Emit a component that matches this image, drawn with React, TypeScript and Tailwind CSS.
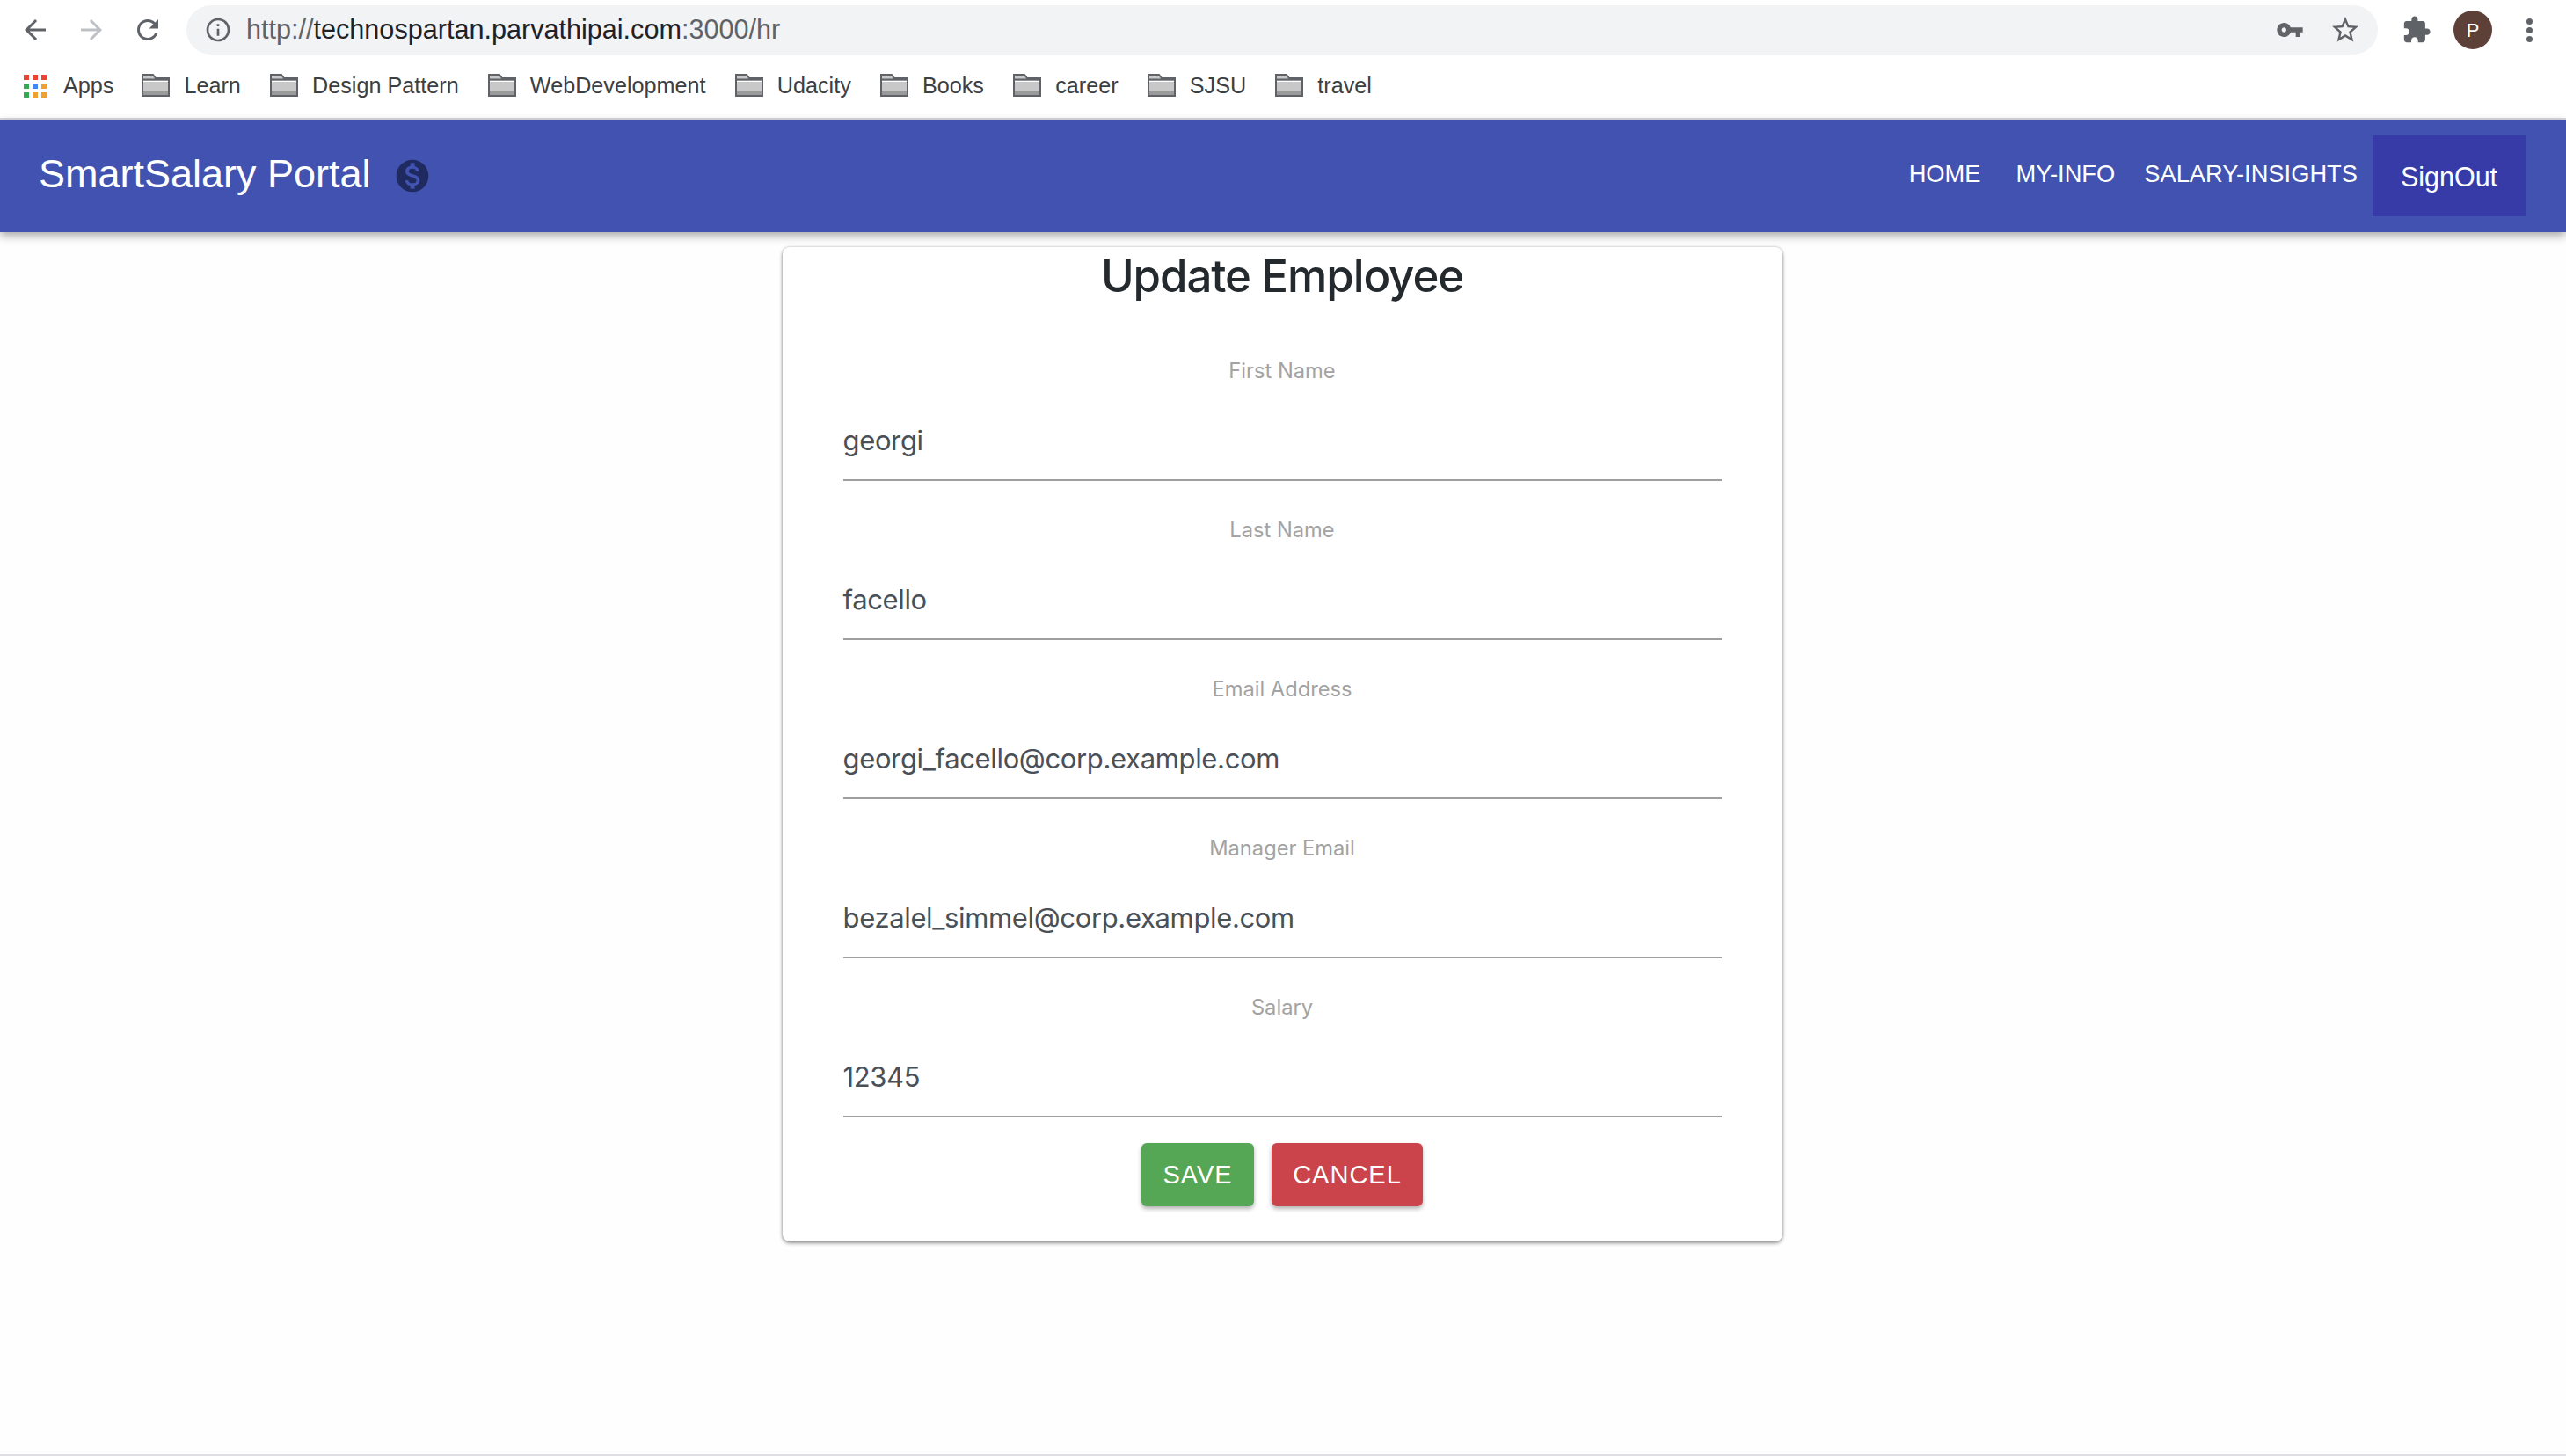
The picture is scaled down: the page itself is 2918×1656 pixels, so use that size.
const PATHS = {
  back: "M20 11H7.83l5.59-5.59L12 4l-8 8 8 8 1.41-1.41L7.83 13H20v-2z",
  forward: "M12 4l-1.41 1.41L16.17 11H4v2h12.17l-5.58 5.59L12 20l8-8z",
  reload:
    "M17.65 6.35C16.2 4.9 14.21 4 12 4c-4.42 0-7.99 3.58-7.99 8s3.57 8 7.99 8c3.73 0 6.84-2.55 7.73-6h-2.08c-.82 2.33-3.04 4-5.65 4-3.31 0-6-2.69-6-6s2.69-6 6-6c1.66 0 3.14.69 4.22 1.78L13 11h7V4l-2.35 2.35z",
  info: "M11 7h2v2h-2zm0 4h2v6h-2zm1-9C6.48 2 2 6.48 2 12s4.48 10 10 10 10-4.48 10-10S17.52 2 12 2zm0 18c-4.41 0-8-3.59-8-8s3.59-8 8-8 8 3.59 8 8-3.59 8-8 8z",
  key: "M12.65 10C11.83 7.67 9.61 6 7 6c-3.31 0-6 2.69-6 6s2.69 6 6 6c2.61 0 4.83-1.67 5.65-4H17v4h4v-4h2v-4H12.65zM7 14c-1.1 0-2-.9-2-2s.9-2 2-2 2 .9 2 2-.9 2-2 2z",
  star: "M22 9.24l-7.19-.62L12 2 9.19 8.63 2 9.24l5.46 4.73L5.82 21 12 17.27 18.18 21l-1.63-7.03L22 9.24zM12 15.4l-3.76 2.27 1-4.28-3.32-2.88 4.38-.38L12 6.1l1.71 4.04 4.38.38-3.32 2.88 1 4.28L12 15.4z",
  puzzle:
    "M20.5 11H19V7c0-1.1-.9-2-2-2h-4V3.5C13 2.12 11.88 1 10.5 1S8 2.12 8 3.5V5H4c-1.1 0-1.99.9-1.99 2v3.8H3.5c1.49 0 2.7 1.21 2.7 2.7s-1.21 2.7-2.7 2.7H2V20c0 1.1.9 2 2 2h3.8v-1.5c0-1.49 1.21-2.7 2.7-2.7 1.49 0 2.7 1.21 2.7 2.7V22H17c1.1 0 2-.9 2-2v-4h1.5c1.38 0 2.5-1.12 2.5-2.5S21.88 11 20.5 11z",
  money:
    "M12 2C6.48 2 2 6.48 2 12s4.48 10 10 10 10-4.48 10-10S17.52 2 12 2zm1.41 16.09V20h-2.67v-1.93c-1.71-.36-3.16-1.46-3.27-3.4h1.96c.1 1.05.82 1.87 2.65 1.87 1.96 0 2.4-.98 2.4-1.59 0-.83-.44-1.61-2.67-2.14-2.48-.6-4.18-1.62-4.18-3.67 0-1.72 1.39-2.84 3.11-3.21V4h2.67v1.95c1.86.45 2.79 1.86 2.87 3.39H14.3c-.05-1.11-.64-1.87-2.22-1.87-1.5 0-2.4.68-2.4 1.64 0 .84.65 1.39 2.67 1.91s4.18 1.39 4.18 3.91c-.01 1.83-1.38 2.83-3.12 3.16z",
};

function Icon({ d, className }: { d: string; className: string }) {
  return (
    <svg viewBox="0 0 24 24" className={className} fill="currentColor">
      <path d={d} />
    </svg>
  );
}

function AppsGrid() {
  const colors = ["#ea4335", "#ea4335", "#ea4335", "#34a853", "#4285f4", "#f0a030", "#34a853", "#f0a030", "#f0a030"];
  return (
    <div className="grid grid-cols-3 gap-[4px] w-[26px] shrink-0">
      {colors.map((c, i) => (
        <span key={i} className="h-[6px]" style={{ backgroundColor: c }} />
      ))}
    </div>
  );
}

function Folder() {
  return (
    <svg viewBox="0 0 32 26" className="w-[32px] h-[26px] shrink-0">
      <path d="M1 25V1h12l3 4h15v20z" fill="#c8c8c8" stroke="#5f6368" strokeWidth="2" />
      <path d="M1 6.5h30" stroke="#5f6368" strokeWidth="2" />
      <rect x="2" y="8" width="28" height="1" fill="#fff" />
      <rect x="2" y="20" width="28" height="4" fill="#9a9a9a" />
    </svg>
  );
}

const bookmarks = ["Learn", "Design Pattern", "WebDevelopment", "Udacity", "Books", "career", "SJSU", "travel"];

function Chrome() {
  return (
    <div className="bg-white font-['Liberation_Sans',sans-serif]">
      <div className="h-[68px] flex items-center pl-[22px] pr-[24px]">
        <Icon d={PATHS.back} className="w-[36px] h-[36px] text-[#5f6368] mr-[28px] shrink-0" />
        <Icon d={PATHS.forward} className="w-[36px] h-[36px] text-[#bdc1c6] mr-[28px] shrink-0" />
        <Icon d={PATHS.reload} className="w-[36px] h-[36px] text-[#5f6368] mr-[26px] shrink-0" />
        <div className="w-[2492px] h-[56px] rounded-full bg-[#f1f3f4] flex items-center pl-[20px] pr-[22px] shrink-0">
          <Icon d={PATHS.info} className="w-[32px] h-[32px] text-[#5f6368] shrink-0" />
          <div className="ml-[16px] text-[30.6px] text-[#5f6368] whitespace-nowrap">
            http://<span className="text-[#202124]">technospartan.parvathipai.com</span>:3000/hr
          </div>
          <Icon d={PATHS.key} className="w-[32px] h-[32px] text-[#5f6368] ml-auto mr-[29px] shrink-0" />
          <Icon d={PATHS.star} className="w-[36px] h-[36px] text-[#5f6368] mr-[-3px] shrink-0" />
        </div>
        <Icon d={PATHS.puzzle} className="w-[34px] h-[34px] text-[#5f6368] ml-[27px] shrink-0" />
        <div className="ml-[25px] w-[44px] h-[44px] rounded-full bg-[#5d4037] text-white text-[22px] flex items-center justify-center shrink-0">
          P
        </div>
        <div className="ml-[39px] flex flex-col gap-[3px] shrink-0">
          <span className="w-[7px] h-[7px] rounded-full bg-[#5f6368]" />
          <span className="w-[7px] h-[7px] rounded-full bg-[#5f6368]" />
          <span className="w-[7px] h-[7px] rounded-full bg-[#5f6368]" />
        </div>
      </div>
      <div className="h-[66px] pb-[7px] flex items-center pl-[27px] text-[25.2px] text-[#3c4043] whitespace-nowrap">
        <AppsGrid />
        <span className="ml-[19px] mr-[32px]">Apps</span>
        {bookmarks.map((b) => (
          <div key={b} className="flex items-center gap-[16px] mr-[33.2px]">
            <Folder />
            <span>{b}</span>
          </div>
        ))}
      </div>
      <div className="h-[2px] bg-[#d9dadf]" />
    </div>
  );
}

function NavBar() {
  return (
    <header className="relative h-[128px] bg-[#4152b0] text-white flex items-center pl-[44px] pr-[46px] shadow-[0_4px_10px_rgba(0,0,0,0.35)] font-['Liberation_Sans',sans-serif]">
      <span className="text-[45px] leading-none -mt-[6px]">SmartSalary Portal</span>
      <Icon d={PATHS.money} className="w-[44px] h-[44px] text-[#1f2a60] ml-[25px]" />
      <nav className="ml-auto flex items-center text-[27.3px]">
        <span className="-mt-[3px]">HOME</span>
        <span className="ml-[40px] -mt-[3px]">MY-INFO</span>
        <span className="ml-[33px] -mt-[3px]">SALARY-INSIGHTS</span>
        <button className="ml-[17px] w-[174px] h-[92px] pt-[3px] bg-[#373ba8] text-[30.5px] text-white">SignOut</button>
      </nav>
    </header>
  );
}

function Field({ label, value }: { label: string; value: string }) {
  return (
    <div className="h-[181px] flex flex-col">
      <label className="h-[81px] flex items-center justify-center text-[23.7px] text-[#a3a3a3]">{label}</label>
      <div className="h-[78px] flex items-center text-[31px] tracking-[-0.35px] text-[#495057]">{value}</div>
      <div className="h-[2px] bg-[#9e9e9e] mt-[5px]" />
    </div>
  );
}

const fields = [
  { label: "First Name", value: "georgi" },
  { label: "Last Name", value: "facello" },
  { label: "Email Address", value: "georgi_facello@corp.example.com" },
  { label: "Manager Email", value: "bezalel_simmel@corp.example.com" },
  { label: "Salary", value: "12345" },
];

export default function App() {
  return (
    <div className="min-h-[1656px] bg-[#fefefe] flex flex-col font-['Inter',sans-serif]">
      <Chrome />
      <NavBar />
      <main className="flex-1 flex justify-center pt-[17px] pr-[2px]">
        <form className="w-[1137px] h-[1131px] bg-white rounded-[8px] px-[69px] shadow-[0_2px_4px_rgba(0,0,0,0.4),0_0_3px_rgba(0,0,0,0.2)]">
          <h1 className="h-[64px] pt-[2px] flex items-center justify-center text-[51px] tracking-[-1.1px] font-medium text-[#24292e]">
            Update Employee
          </h1>
          <div className="mt-[36px]">
            {fields.map((f) => (
              <Field key={f.label} {...f} />
            ))}
          </div>
          <div className="flex justify-center gap-[20px] mt-[14px] font-['Liberation_Sans',sans-serif]">
            <button
              type="button"
              className="w-[128px] h-[72px] pt-[2px] rounded-[6px] bg-[#55a655] text-white text-[29px] tracking-[1px] shadow-[0_3px_5px_rgba(0,0,0,0.3)]"
            >
              SAVE
            </button>
            <button
              type="button"
              className="w-[172px] h-[72px] pt-[2px] rounded-[6px] bg-[#cc444b] text-white text-[29px] tracking-[1px] shadow-[0_3px_5px_rgba(0,0,0,0.3)]"
            >
              CANCEL
            </button>
          </div>
        </form>
      </main>
      <div className="h-[2px] bg-[#dedee3]" />
    </div>
  );
}
